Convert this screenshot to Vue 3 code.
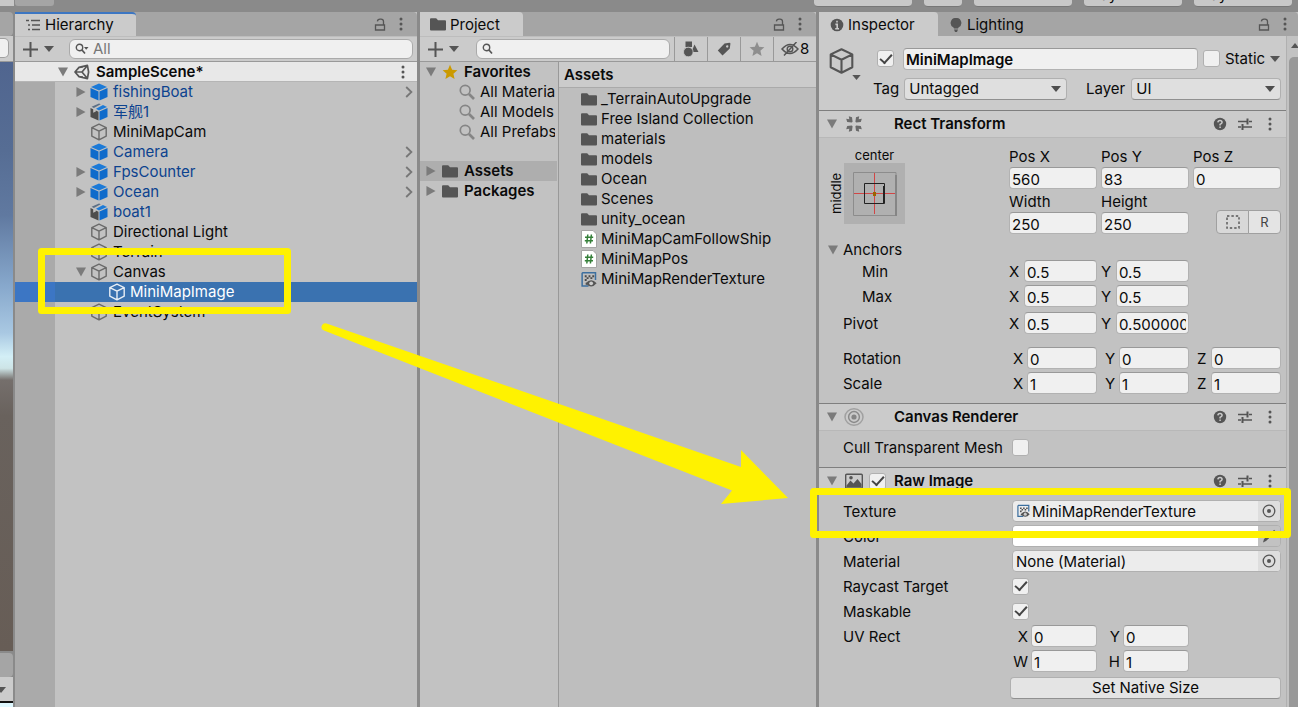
<script setup>
import { ref } from 'vue'

const tree = [
  { name: 'fishingBoat', icon: 'prefab', blue: true, fold: 'closed', open: true },
  { name: '军舰1', icon: 'model', blue: true, fold: 'closed' },
  { name: 'MiniMapCam', icon: 'cube' },
  { name: 'Camera', icon: 'prefab', blue: true, open: true },
  { name: 'FpsCounter', icon: 'prefab', blue: true, fold: 'closed', open: true },
  { name: 'Ocean', icon: 'prefab', blue: true, fold: 'closed', open: true },
  { name: 'boat1', icon: 'model', blue: true },
  { name: 'Directional Light', icon: 'cube' },
  { name: 'Terrain', icon: 'cube' },
  { name: 'Canvas', icon: 'cube', fold: 'opened' },
  { name: 'MiniMapImage', icon: 'cube', selected: true },
  { name: 'EventSystem', icon: 'cube' }
]

const favorites = ['All Materials', 'All Models', 'All Prefabs']

const assets = [
  { name: '_TerrainAutoUpgrade', icon: 'folder' },
  { name: 'Free Island Collection', icon: 'folder' },
  { name: 'materials', icon: 'folder' },
  { name: 'models', icon: 'folder' },
  { name: 'Ocean', icon: 'folder' },
  { name: 'Scenes', icon: 'folder' },
  { name: 'unity_ocean', icon: 'folder' },
  { name: 'MiniMapCamFollowShip', icon: 'script' },
  { name: 'MiniMapPos', icon: 'script' },
  { name: 'MiniMapRenderTexture', icon: 'texture' }
]

const sizeFields = ref([
  { label: 'Pos X', value: '560' },
  { label: 'Pos Y', value: '83' },
  { label: 'Pos Z', value: '0' },
  { label: 'Width', value: '250' },
  { label: 'Height', value: '250' }
])

const vectors = ref([
  { label: 'Min', kind: 'anchor indent', axes: [['X', '0.5'], ['Y', '0.5']] },
  { label: 'Max', kind: 'anchor indent', axes: [['X', '0.5'], ['Y', '0.5']] },
  { label: 'Pivot', kind: 'anchor pivot', axes: [['X', '0.5'], ['Y', '0.5000001']] },
  { label: 'Rotation', kind: 'turn', axes: [['X', '0'], ['Y', '0'], ['Z', '0']] },
  { label: 'Scale', kind: 'scale', axes: [['X', '1'], ['Y', '1'], ['Z', '1']] }
])

const uvRows = ref([
  { label: 'UV Rect', axes: [['X', '0'], ['Y', '0']] },
  { label: '', axes: [['W', '1'], ['H', '1']] }
])
</script>

<template>
  <div class="editor">
    <svg class="defs" aria-hidden="true">
      <symbol id="cube" viewBox="0 0 18 18">
        <path d="M9 1.2 16.2 4.6V13.2L9 16.8 1.8 13.2V4.6ZM1.8 4.6 9 8.2 16.2 4.6M9 8.2V16.8" fill="none" stroke="currentColor" stroke-width="1.4" stroke-linejoin="round" />
      </symbol>
      <symbol id="prefab" viewBox="0 0 18 18">
        <path d="M9 .4 17 3.900 9 7.600 1 3.900Z" fill="#1b7ad8" />
        <path d="M.5 5 8.500 8.600V17.600L.5 14Z" fill="#0f6bcb" />
        <path d="M17.500 5 9.500 8.600V17.600L17.500 14Z" fill="#0f6bcb" />
      </symbol>
      <symbol id="model" viewBox="0 0 18 18">
        <path d="M.5 5 3.200 6.200V9.800L5.800 8.600V7.500L8.500 8.700V17.600L.5 14Z" fill="#4d4d4d" />
        <path d="M9.500 8.600 17.500 5V14L9.500 17.600Z" fill="#0f6bcb" />
        <path d="M1.600 3.800 9 .4 10.800 1.200 3.800 5Z" fill="#5b6f86" />
        <path d="M6 5.800 13 2 17 3.900 9 7.600Z" fill="#1b7ad8" />
      </symbol>
      <symbol id="unity" viewBox="0 0 16 16">
        <path d="M1 8 5 3.400 13.400 1.400 14.600 8 13.400 14.600 5 12.600ZM1.400 8H8M8 8 13 2M8 8 13 14M5 3.400 9 2.800M5 12.600 9 13.200" fill="none" stroke="currentColor" stroke-width="1.700" stroke-linejoin="round" />
      </symbol>
      <symbol id="folder" viewBox="0 0 16 13">
        <path d="M0 1.2Q0 .2 1 .2H6.2L8 2.2H15Q16 2.2 16 3.2V11.6Q16 12.6 15 12.6H1Q0 12.6 0 11.6Z" fill="currentColor" />
      </symbol>
      <symbol id="script" viewBox="0 0 16 18">
        <path d="M.5.5H12L15.500 4V17.500H.5Z" fill="#fff" stroke="#a6a6a6" stroke-width="1" />
        <path d="M6.800 4.500 5.800 13.500M10.400 4.500 9.400 13.500M4 7.300H12.200M3.800 10.700H12" fill="none" stroke="#35803a" stroke-width="1.500" />
      </symbol>
      <symbol id="texture" viewBox="0 0 17 17">
        <path d="M1.2 1.2H15.4V9M8 15.400H1.2V1.2" fill="none" stroke="#3c6f9f" stroke-width="1.600" />
        <path d="M4 4h2v2H4zM8 4h2v2H8zM12 4h2v2h-2zM6 6h2v2H6zM10 6h2v2h-2zM4 8h2v2H4zM5 12h2v2H5z" fill="#4a4a4a" />
        <path d="M5 12.600Q10.800 5.800 16.600 12.600Q10.800 19.400 5 12.600Z" fill="#555" />
        <circle cx="10.800" cy="12.600" r="2" fill="#ccc" />
      </symbol>
      <symbol id="lens" viewBox="0 0 16 16">
        <circle cx="6.2" cy="6.2" r="4.9" fill="none" stroke="currentColor" stroke-width="1.700" />
        <path d="M10 10 15 15" stroke="currentColor" stroke-width="2.6" />
      </symbol>
      <symbol id="lock" viewBox="0 0 12 13">
        <path d="M1.500 7H10.500V12H1.500ZM9.500 7V3.500Q9.500 1.200 7 1.200H6Q3.600 1.200 3.400 3.400" fill="none" stroke="currentColor" stroke-width="1.300" />
      </symbol>
      <symbol id="dots" viewBox="0 0 4 14">
        <circle cx="2" cy="2" r="1.500" fill="currentColor" /><circle cx="2" cy="7" r="1.500" fill="currentColor" /><circle cx="2" cy="12" r="1.500" fill="currentColor" />
      </symbol>
      <symbol id="plus" viewBox="0 0 15 15">
        <path d="M7.500 0V15M0 7.500H15" stroke="currentColor" stroke-width="2" />
      </symbol>
      <symbol id="down" viewBox="0 0 10 6"><path d="M0 0H10L5 6Z" fill="currentColor" /></symbol>
      <symbol id="opened" viewBox="0 0 11 10"><path d="M0 0H11L5.500 10Z" fill="currentColor" /></symbol>
      <symbol id="closed" viewBox="0 0 10 11"><path d="M0 0V11L10 5.500Z" fill="currentColor" /></symbol>
      <symbol id="chevron" viewBox="0 0 8 12"><path d="M1.200 1 6.400 6 1.200 11" fill="none" stroke="currentColor" stroke-width="1.800" /></symbol>
      <symbol id="star" viewBox="0 0 16 16">
        <path d="M8 .8 10.100 5.800 15.400 6.200 11.400 9.700 12.600 15 8 12.200 3.400 15 4.600 9.700.6 6.200 5.900 5.800Z" fill="currentColor" />
      </symbol>
      <symbol id="help" viewBox="0 0 14 14">
        <circle cx="7" cy="7" r="6.200" fill="currentColor" />
        <path d="M4.900 5.400Q5 3.400 7 3.400T9.100 5.200Q9.100 6.300 7.100 7.300V8.400M7.100 9.500V11" fill="none" stroke="#cbcbcb" stroke-width="1.500" />
      </symbol>
      <symbol id="preset" viewBox="0 0 14 14">
        <path d="M0 4.500H9M11 4.500H14M0 10H3M5 10H14" stroke="currentColor" stroke-width="1.400" />
        <path d="M9.500 1.500V7.500M4.500 7V13" stroke="currentColor" stroke-width="2" />
      </symbol>
      <symbol id="target" viewBox="0 0 14 14">
        <circle cx="7" cy="7" r="5.800" fill="none" stroke="currentColor" stroke-width="1.300" /><circle cx="7" cy="7" r="2" fill="currentColor" />
      </symbol>
    </svg>

    <div class="topbar">
      <div class="topbar-left"><span class="stub light"></span><span class="stub dim"></span></div>
      <div class="topbar-right">
        <button class="top-button wide" aria-label="Collab"></button>
        <button class="top-button cloud" aria-label="Cloud"></button>
        <button class="top-button wide" aria-label="Account"></button>
        <button class="top-button wide">Layers</button>
        <button class="top-button wide">Layout</button>
      </div>
    </div>

    <div class="panels">
      <section class="scene">
        <div class="scene-tabs"></div>
        <div class="scene-tools"><span class="scene-field"></span></div>
        <div class="sky"></div>
        <div class="scene-tabs lower"></div>
        <div class="scene-tools foot"><svg class="i-down"><use href="#down" /></svg></div>
        <div class="game"></div>
      </section>

      <section class="panel">
        <header class="tabs">
          <button class="tab active hierarchy-tab">
            <svg class="i-list" viewBox="0 0 14 12"><path d="M0 1.500H3M5 1.500H14M2 6H4M6 6H14M2 10.500H4M6 10.500H14" stroke="currentColor" stroke-width="1.500" /></svg>
            Hierarchy
          </button>
          <span class="tab-tools"><svg class="i-lock"><use href="#lock" /></svg><svg class="i-dots"><use href="#dots" /></svg></span>
        </header>
        <div class="toolbar">
          <button class="add" aria-label="Create"><svg class="i-plus"><use href="#plus" /></svg><svg class="i-down"><use href="#down" /></svg></button>
          <label class="search hierarchy-search">
            <svg class="i-find" viewBox="0 0 14 12"><circle cx="4.500" cy="4.500" r="3.200" fill="none" stroke="currentColor" stroke-width="1.400" /><path d="M7 7 10 10.500" stroke="currentColor" stroke-width="1.700" /><path d="M9 4H13.500L11.200 6.800Z" fill="currentColor" /></svg>
            <input type="text" placeholder="All" aria-label="Search hierarchy" />
          </label>
        </div>
        <div class="tree">
          <div class="scene-row">
            <svg class="fold"><use href="#opened" /></svg>
            <svg class="i-unity"><use href="#unity" /></svg>
            <b>SampleScene*</b>
            <svg class="i-dots"><use href="#dots" /></svg>
          </div>
          <div v-for="node in tree" :key="node.name" class="node" :class="{ selected: node.selected, blue: node.blue }">
            <span class="gutter"></span>
            <span class="fold-slot"><svg v-if="node.fold" class="fold"><use :href="'#' + node.fold" /></svg></span>
            <svg class="i-cube"><use :href="'#' + node.icon" /></svg>
            <span class="node-name">{{ node.name }}</span>
            <svg v-if="node.open" class="i-chevron"><use href="#chevron" /></svg>
          </div>
          <div class="gutter rest"></div>
        </div>
      </section>

      <section class="panel">
        <header class="tabs">
          <button class="tab active project-tab"><svg class="i-folder"><use href="#folder" /></svg>Project</button>
          <span class="tab-tools"><svg class="i-lock"><use href="#lock" /></svg><svg class="i-dots"><use href="#dots" /></svg></span>
        </header>
        <div class="toolbar">
          <button class="add" aria-label="Create"><svg class="i-plus"><use href="#plus" /></svg><svg class="i-down"><use href="#down" /></svg></button>
          <label class="search project-search">
            <svg class="i-find" viewBox="0 0 14 12"><circle cx="4.500" cy="4.500" r="3.200" fill="none" stroke="currentColor" stroke-width="1.400" /><path d="M7 7 10 10.500" stroke="currentColor" stroke-width="1.700" /></svg>
            <input type="text" aria-label="Search project" />
          </label>
          <button class="filter" aria-label="Filter by type">
            <svg class="i-tool" viewBox="0 0 16 16"><path d="M2.500.5H9V6H2.500ZM11.500 3.500 15.500 11H8.500Z" fill="currentColor" /><circle cx="5.300" cy="11" r="4.800" fill="currentColor" stroke="#cbcbcb" stroke-width=".8" /></svg>
          </button>
          <button class="filter" aria-label="Filter by label">
            <svg class="i-tool" viewBox="0 0 16 16"><path d="M8.500 2.500 13.500 1.800Q14.500 1.800 14.400 2.800L13.800 7.500 6.500 14.500 1.800 9.500ZM11 4.300A1.200 1.200 0 1 0 12.400 5.600 1.200 1.200 0 0 0 11 4.300Z" fill="currentColor" fill-rule="evenodd" /></svg>
          </button>
          <button class="filter muted" aria-label="Save search"><svg class="i-tool"><use href="#star" /></svg></button>
          <button class="filter hidden-count" aria-label="Hidden packages">
            <svg class="i-eye" viewBox="0 0 18 14"><path d="M1 7Q9-2 17 7Q9 16 1 7ZM15.500 0 3 13.500" fill="none" stroke="currentColor" stroke-width="1.500" /><circle cx="9" cy="7" r="2.800" fill="none" stroke="currentColor" stroke-width="1.400" /></svg>8
          </button>
        </div>
        <div class="project-body">
          <nav class="sources">
            <div class="source top"><svg class="fold"><use href="#opened" /></svg><svg class="i-star"><use href="#star" /></svg><b>Favorites</b></div>
            <div v-for="f in favorites" :key="f" class="source child"><svg class="i-lens"><use href="#lens" /></svg><span>{{ f }}</span></div>
            <div class="source top picked"><svg class="fold"><use href="#closed" /></svg><svg class="i-folder"><use href="#folder" /></svg><b>Assets</b></div>
            <div class="source top"><svg class="fold"><use href="#closed" /></svg><svg class="i-folder"><use href="#folder" /></svg><b>Packages</b></div>
          </nav>
          <div class="assets">
            <div class="assets-head"><b>Assets</b></div>
            <ul>
              <li v-for="a in assets" :key="a.name"><svg :class="'i-' + a.icon"><use :href="'#' + a.icon" /></svg>{{ a.name }}</li>
            </ul>
          </div>
        </div>
      </section>

      <section class="panel inspector">
        <header class="tabs">
          <button class="tab active inspector-tab">
            <svg class="i-info" viewBox="0 0 14 14"><circle cx="7" cy="7" r="6.300" fill="currentColor" /><path d="M7 2.700V4.600M5.400 6.400H7.200V10.700M5.200 10.700H9" fill="none" stroke="#cbcbcb" stroke-width="1.600" /></svg>Inspector
          </button>
          <button class="tab lighting-tab">
            <svg class="i-info" viewBox="0 0 14 14"><path d="M7 0A5 5 0 0 1 9.500 9.500L9 10.500H5L4.500 9.500A5 5 0 0 1 7 0ZM5 11.500H9L8 14H6Z" fill="currentColor" /></svg>Lighting
          </button>
          <span class="tab-tools"><svg class="i-lock"><use href="#lock" /></svg><svg class="i-dots"><use href="#dots" /></svg></span>
        </header>
        <div class="inspector-view">
          <div class="inspector-body">
            <div class="object">
              <div class="object-icon"><svg class="i-big"><use href="#cube" /></svg><svg class="i-small-down"><use href="#down" /></svg></div>
              <div class="object-fields">
                <div class="object-row">
                  <input class="check" type="checkbox" checked aria-label="Active" />
                  <input class="field object-name" type="text" value="MiniMapImage" aria-label="Name" />
                  <label class="static"><input class="check" type="checkbox" />Static<svg class="i-down"><use href="#down" /></svg></label>
                </div>
                <div class="object-row second">
                  <label for="tag">Tag</label>
                  <span class="select tag"><select id="tag"><option>Untagged</option></select></span>
                  <label class="layer-label" for="layer">Layer</label>
                  <span class="select layer"><select id="layer"><option>UI</option></select></span>
                </div>
              </div>
            </div>

            <div class="component-head">
              <svg class="fold"><use href="#opened" /></svg>
              <svg class="i-comp" viewBox="0 0 18 18"><path id="wedge" d="M3.800 1.200 7 2.200 7.600 6.800 6.800 7.600 2.200 7 1.200 3.800 4.300 4.300Z" fill="#6a6a6a" /><use href="#wedge" transform="matrix(-1 0 0 1 18 0)" /><use href="#wedge" transform="matrix(1 0 0 -1 0 18)" /><use href="#wedge" transform="matrix(-1 0 0 -1 18 18)" /></svg>
              <span class="head-slot"></span><b>Rect Transform</b>
              <span class="head-tools"><svg class="i-help"><use href="#help" /></svg><svg class="i-help"><use href="#preset" /></svg><svg class="i-dots"><use href="#dots" /></svg></span>
            </div>
            <div class="rect-body">
              <div class="rect-top">
                <div class="anchor-preset">
                  <span class="h-align">center</span>
                  <span class="v-align">middle</span>
                  <svg class="anchor-box" viewBox="0 0 61 61">
                    <rect width="61" height="61" fill="#b0b0b0" />
                    <path d="M9.500 9.500H52V52.500H9.500Z" fill="none" stroke="#8c8c8c" />
                    <path d="M52 12V53" stroke="#858585" stroke-width="2" />
                    <path d="M30.500 10V51M10 30.500H51" stroke="#d24545" />
                    <path d="M20.500 20.500H40.500V40.500H20.500Z" fill="none" stroke="#222" />
                    <path d="M40 23V40" stroke="#222" stroke-width="2" />
                    <rect x="29" y="29" width="3" height="4" fill="#9a6500" />
                  </svg>
                </div>
                <div class="size-grid">
                  <label v-for="f in sizeFields" :key="f.label" class="size-field">{{ f.label }}<input v-model="f.value" class="field" type="text" /></label>
                  <div class="mode-buttons">
                    <button aria-label="Blueprint mode"><svg class="i-dash" viewBox="0 0 14 14"><rect x="1" y="1" width="12" height="12" fill="none" stroke="currentColor" stroke-width="1.400" stroke-dasharray="2.400 2" /></svg></button>
                    <button>R</button>
                  </div>
                </div>
              </div>
              <div class="anchors-row"><svg class="fold"><use href="#opened" /></svg>Anchors</div>
              <div v-for="v in vectors" :key="v.label" class="prop vector" :class="v.kind">
                <span class="prop-label">{{ v.label }}</span>
                <div class="triple">
                  <label v-for="axis in v.axes" :key="axis[0]" class="axis"><span>{{ axis[0] }}</span><input v-model="axis[1]" class="field" type="text" /></label>
                </div>
              </div>
            </div>

            <div class="component-head">
              <svg class="fold"><use href="#opened" /></svg>
              <svg class="i-comp wide-icon" viewBox="0 0 20 18"><g fill="none" stroke="#8a8a8a" stroke-width="1.500"><ellipse cx="10" cy="9" rx="9" ry="8.200" stroke="#a0a0a0" /><circle cx="10" cy="9" r="5.400" /></g><circle cx="10" cy="9" r="2.600" fill="#858585" /></svg>
              <span class="head-slot"></span><b>Canvas Renderer</b>
              <span class="head-tools"><svg class="i-help"><use href="#help" /></svg><svg class="i-help"><use href="#preset" /></svg><svg class="i-dots"><use href="#dots" /></svg></span>
            </div>
            <div class="canvas-body">
              <label class="prop"><span class="prop-label">Cull Transparent Mesh</span><input class="check" type="checkbox" /></label>
            </div>

            <div class="component-head">
              <svg class="fold"><use href="#opened" /></svg>
              <svg class="i-comp" viewBox="0 0 18 18"><rect x=".7" y="2.200" width="16.600" height="14" rx="1" fill="none" stroke="#555" stroke-width="1.400" /><path d="M1.500 13.500 5.500 8.500 8.500 11.500 12.500 7 16.500 12V15.500H1.500Z" fill="#555" /><circle cx="6" cy="5.800" r="1.800" fill="#555" /></svg>
              <span class="head-slot"><input class="check" type="checkbox" checked aria-label="Raw Image enabled" /></span><b>Raw Image</b>
              <span class="head-tools"><svg class="i-help"><use href="#help" /></svg><svg class="i-help"><use href="#preset" /></svg><svg class="i-dots"><use href="#dots" /></svg></span>
            </div>
            <div class="raw-body">
              <div class="prop"><span class="prop-label">Texture</span><button class="object-field"><svg class="i-mini"><use href="#texture" /></svg><span>MiniMapRenderTexture</span><i><svg class="i-target"><use href="#target" /></svg></i></button></div>
              <div class="prop"><span class="prop-label">Color</span><button class="object-field color" aria-label="Color"><span></span><i><svg class="i-target" viewBox="0 0 14 14"><path d="M1 13.500 2 10 8 4.500 10 6.500 4 12ZM8 2.500 9.500 4 12 .8 13.800 2.600 11.300 5.500 12 7 7.500 3Z" fill="currentColor" /></svg></i></button></div>
              <div class="prop"><span class="prop-label">Material</span><button class="object-field"><span>None (Material)</span><i><svg class="i-target"><use href="#target" /></svg></i></button></div>
              <label class="prop"><span class="prop-label">Raycast Target</span><input class="check" type="checkbox" checked /></label>
              <label class="prop"><span class="prop-label">Maskable</span><input class="check" type="checkbox" checked /></label>
              <div v-for="row in uvRows" :key="row.label" class="prop uv">
                <span class="prop-label">{{ row.label }}</span>
                <div class="triple">
                  <label v-for="axis in row.axes" :key="axis[0]" class="axis"><span>{{ axis[0] }}</span><input v-model="axis[1]" class="field" type="text" /></label>
                </div>
              </div>
              <button class="native">Set Native Size</button>
            </div>
          </div>
          <div class="scrollbar"><svg class="i-up" viewBox="0 0 8 5"><path d="M0 5 4 0 8 5Z" fill="currentColor" /></svg><span></span></div>
        </div>
      </section>
    </div>

    <svg class="notes" width="1298" height="707" viewBox="0 0 1298 707" aria-hidden="true">
      <g fill="none" stroke="#fff200" stroke-width="7" stroke-linejoin="round">
        <rect x="41.500" y="251.500" width="246" height="59" />
        <rect x="813.500" y="491.500" width="474" height="43" />
      </g>
      <path d="M326.500 323.500 741 467V450L788 498 721 504 732 490.500 324 330.500A3.700 3.700 0 0 1 326.500 323.500Z" fill="#fff200" />
    </svg>
  </div>
</template>

<style>
body { margin: 0; background: #8a8a8a; }
</style>

<style scoped>
* { box-sizing: border-box; }
.editor {
  position: relative;
  display: flex;
  flex-direction: column;
  height: 100vh;
  overflow: hidden;
  background: #8a8a8a;
  color: #0a0a0a;
  font: 15px/20px Inter, "Noto Sans CJK SC", sans-serif;
}
button, input, select { font: inherit; color: inherit; margin: 0; }
button { border: 0; padding: 0; background: none; }
svg { display: block; flex: none; color: #555; }
b { font-weight: 600; }
.defs { position: absolute; width: 0; height: 0; }

.topbar { display: flex; justify-content: space-between; height: 12px; flex: none; overflow: hidden; }
.topbar-left { display: flex; gap: 1px; }
.stub.light { width: 14px; height: 6px; background: #c8c8c8; }
.stub.dim { width: 39px; height: 6px; background: #a5a5a5; border-radius: 0 0 3px 3px; }
.topbar-right { display: flex; align-items: flex-end; height: 7px; gap: 12px; padding-right: 6px; }
.top-button { height: 22px; width: 98px; line-height: 20px; text-align: left; padding: 0 0 5px 8px; background: #c8c8c8; border-bottom: 1px solid #777; border-radius: 4px; flex: none; }
.top-button.cloud { width: 38px; }

.panels { flex: 1; min-height: 0; display: grid; grid-template-columns: 13px minmax(0, 404fr) minmax(0, 399fr) minmax(0, 482fr); }
.panel { display: flex; flex-direction: column; min-width: 0; margin-left: 3px; background: #c2c2c2; }
.scene + .panel { margin-left: 2px; }

.scene { display: flex; flex-direction: column; }
.scene-tabs { height: 24px; background: #a5a5a5; border-radius: 0 4px 4px 0; }
.scene-tabs.lower { margin-top: 2px; }
.scene-tools { height: 26px; background: #cbcbcb; border-bottom: 1px solid #999; padding-top: 2px; }
.scene-tools .scene-field { display: block; width: 9px; height: 20px; background: #f0f0f0; border: 1px solid #a0a0a0; border-left: 0; border-radius: 0 5px 5px 0; }
.scene-tools.foot { border-bottom: 2px solid #111; padding-top: 10px; overflow: hidden; }
.foot .i-down { margin-left: -4px; }
.sky { flex: 1; background: linear-gradient(#50658f 0, #566d94 15%, #6079a0 26%, #87a8cc 38%, #a9c8e2 46%, #d3eff6 50%, #cde4e6 52%, #756f6c 54%, #69625d 60%, #675d56 100%); }
.game { height: 4px; background: #dff8ff; }

.tabs { display: flex; align-items: stretch; height: 24px; flex: none; background: #a5a5a5; border-radius: 0 4px 0 0; }
.tab { display: flex; align-items: center; gap: 4px; padding: 1px 0 0 11px; }
.tab.active { background: #cbcbcb; border-radius: 0 4px 0 0; }
.tab.hierarchy-tab { width: 121px; gap: 5px; padding-top: 0; border-top: 2px solid #3c76c2; }
.project-tab { width: 103px; }
.tab.project-tab { padding-left: 10px; }
.inspector-tab { width: 119px; }
.lighting-tab { width: 110px; }
.tab-tools { margin-left: auto; display: flex; align-items: center; gap: 13px; padding-right: 14px; }
.inspector .tab-tools { padding-right: 11px; }
.i-list { width: 14px; height: 12px; }
.i-lock { width: 12px; height: 13px; }
.i-dots { width: 4px; height: 14px; }
.i-info { width: 14px; height: 14px; }
.i-folder { width: 16px; height: 13px; }

.toolbar { display: flex; align-items: center; height: 26px; flex: none; padding-left: 8px; background: #cbcbcb; border-bottom: 1px solid #999; border-top: 1px solid #bdbdbd; }
.add { display: flex; align-items: center; gap: 6px; width: 46px; }
.i-plus { width: 15px; height: 15px; }
.i-down { width: 10px; height: 6px; }
.search { display: flex; align-items: center; flex: 1; min-width: 0; height: 20px; padding-left: 5px; gap: 4px; background: #f0f0f0; border: 1px solid #aaa; border-radius: 6px; }
.hierarchy-search { margin-right: 4px; }
.project-search { margin: 0 4px 0 2px; }
.search input { flex: 1; min-width: 0; border: 0; padding: 0; background: none; outline: 0; line-height: 18px; }
.search input::placeholder { color: #777; opacity: 1; }
.i-find { width: 14px; height: 12px; }
.filter { display: grid; place-items: center; width: 33px; height: 25px; border-left: 1px solid #999; }
.filter.muted svg { color: #8e8e8e; }
.filter.hidden-count { display: flex; align-items: center; width: 43px; padding-left: 7px; gap: 1px; }
.i-tool { width: 16px; height: 16px; }
.i-eye { width: 18px; height: 14px; }

.tree { flex: 1; min-height: 0; display: flex; flex-direction: column; }
.scene-row { display: flex; align-items: center; height: 20px; flex: none; padding: 0 12px 0 43px; background: #e8e8e8; border-bottom: 1px solid #b5b5b5; }
.scene-row .i-dots { margin-left: auto; }
.fold { width: 10px; height: 10px; color: #7b7b7b; }
.i-unity { width: 16px; height: 16px; margin: 0 6px; }
.node { display: flex; align-items: center; height: 20px; flex: none; padding-right: 4px; }
.gutter { width: 40px; align-self: stretch; background: #aaa; }
.tree > .rest { flex: 1; align-self: flex-start; }
.fold-slot { width: 35px; padding-left: 21px; }
.i-cube { width: 18px; height: 18px; color: #6a6a6a; }
.node-name { padding-left: 5px; }
.blue { color: #0c428f; }
.i-chevron { width: 8px; height: 12px; margin-left: auto; color: #777; }
.selected { background: #3a72b0; color: #fff; }
.selected .gutter { background: #3c76c4; }
.selected .fold-slot { width: 53px; }
.selected .node-name { padding-left: 4px; }
.selected .i-cube { color: #e8eef5; }

.project-body { flex: 1; min-height: 0; display: grid; grid-template-columns: 139px minmax(0, 1fr); }
.sources { min-width: 0; overflow: hidden; border-right: 1px solid #999; padding-right: 1px; white-space: nowrap; }
.source { display: flex; align-items: center; height: 20px; overflow: hidden; }
.top { padding-left: 6px; }
.top .fold { margin-right: 6px; }
.top b { padding-left: 6px; }
.child { margin-right: 2px; padding-left: 39px; gap: 5px; }
.picked { margin-top: 19px; background: #aeaeae; }
.i-star { width: 16px; height: 16px; color: #cb9a00; }
.i-lens { width: 16px; height: 16px; color: #858585; }
.assets { background: #bebebe; }
.assets-head { height: 26px; line-height: 26px; padding-left: 5px; background: #cbcbcb; border-bottom: 1px solid #aaa; }
.assets ul { list-style: none; margin: 0; padding: 1px 0 0 22px; }
.assets li { display: flex; align-items: center; gap: 4px; height: 20px; white-space: nowrap; }
.i-script { width: 16px; height: 18px; }
.i-texture { width: 16px; height: 17px; }

.inspector-view { flex: 1; min-height: 0; display: flex; }
.inspector-body { flex: 1; min-width: 0; border-right: 1px solid #b0b0b0; }
.scrollbar { width: 11px; padding: 7px 0 0 2px; background: #c2c2c2; display: flex; flex-direction: column; gap: 9px; overflow: hidden; }
.scrollbar span { flex: 1; background: #999; border-radius: 5px 0 0 0; }
.i-up { width: 8px; height: 5px; margin-left: 2px; }

.object { display: flex; height: 74px; padding: 11px 5px 0 9px; background: #cbcbcb; }
.object-icon { width: 44px; }
.i-big { width: 27px; height: 28px; }
.i-small-down { width: 9px; height: 5px; margin-left: 24px; }
.object-fields { flex: 1; min-width: 0; }
.object-row { display: flex; align-items: center; padding-left: 5px; height: 23px; }
.object-row.second { margin-top: 7px; padding-left: 1px; }
.object-name { flex: 1; margin: 0 5px 0 9px; font-weight: 600; }
.static { display: flex; align-items: center; width: 78px; }
.static .check { margin-right: 5px; }
.static .i-down { margin-left: 5px; }
.check { appearance: none; display: grid; place-items: center; flex: none; width: 17px; height: 17px; background: #f0f0f0; border: 1px solid #b0b0b0; border-radius: 3px; }
.check:checked::after { content: ""; width: 10px; height: 5px; border: solid #444; border-width: 0 0 2px 2px; transform: rotate(-48deg); margin-bottom: 3px; }
.field { display: block; min-width: 0; width: 100%; height: 22px; padding: 2px 2px 0; background: #f0f0f0; border: 1px solid #b2b2b2; border-top-color: #999; border-radius: 4px; outline: 0; }
.select { position: relative; display: block; min-width: 0; }
.select::after { content: ""; position: absolute; right: 6px; top: 8px; border: solid transparent; border-width: 6px 5px 0; border-top-color: #4d4d4d; }
.select select { appearance: none; display: block; width: 100%; height: 22px; padding: 0 4px; background: #dfdfdf; border: 1px solid #b0b0b0; border-bottom-color: #909090; border-radius: 4px; }
.select.tag { flex: 162; margin-left: 5px; }
.select.layer { flex: 149; margin-left: 6px; }
.layer-label { margin-left: 19px; }

.component-head { display: flex; align-items: center; height: 28px; padding: 0 14px 0 8px; background: #cbcbcb; border-top: 1px solid #7f7f7f; border-bottom: 1px solid #b8b8b8; }
.i-comp { width: 18px; height: 18px; margin-left: 8px; }
.wide-icon { width: 20px; height: 18px; margin: 0 -1px 0 7px; }
.head-slot { width: 31px; padding-left: 6px; }
.head-tools { margin-left: auto; display: flex; align-items: center; gap: 11px; }
.head-tools .i-dots { margin-left: 5px; }
.i-help { width: 14px; height: 14px; }

.rect-body { padding: 9px 5px 9px 24px; }
.rect-top { display: flex; }
.anchor-preset { width: 166px; display: grid; grid-template: 16px 61px / 1px 61px; }
.h-align { grid-column: 2; font-size: 13px; line-height: 16px; text-align: center; }
.v-align { grid-row: 2; justify-self: end; writing-mode: vertical-rl; transform: rotate(180deg); font-size: 13px; line-height: 16px; text-align: center; }
.anchor-box { width: 61px; height: 61px; }
.size-grid { flex: 1; min-width: 0; display: grid; grid-template-columns: repeat(3, minmax(0, 1fr)); gap: 3px 4px; }
.mode-buttons { display: flex; align-self: end; justify-self: end; }
.mode-buttons button { display: grid; place-items: center; width: 33px; height: 24px; background: #d8d8d8; border: 1px solid #a0a0a0; border-radius: 4px 0 0 4px; font-size: 13px; color: #444; }
.mode-buttons button + button { margin-left: -1px; background: #e4e4e4; border-radius: 0 4px 4px 0; }
.i-dash { width: 14px; height: 14px; }
.anchors-row { display: flex; align-items: center; height: 20px; margin: 6px 0 0 -15px; gap: 5px; }

.prop { display: flex; align-items: center; height: 22px; margin-bottom: 3px; }
.prop-label { width: 169px; flex: none; padding-top: 2px; white-space: nowrap; }
.vector .prop-label, .uv .prop-label { width: 166px; }
.indent .prop-label { padding-left: 19px; }
.pivot { margin: 5px 0 13px; }
.scale { margin-bottom: 0; }
.triple { flex: 1; min-width: 0; display: grid; grid-template-columns: repeat(3, minmax(0, 1fr)); gap: 4px; }
.axis { display: flex; align-items: center; min-width: 0; }
.axis span { width: 15px; flex: none; padding-top: 1px; }
.turn .axis span, .scale .axis span { width: 18px; padding-left: 4px; }
.uv .axis span { width: 22px; text-align: right; padding-right: 3px; }
.canvas-body { padding: 5px 5px 6px 24px; }
.raw-body { padding: 5px 5px 0 24px; }
.object-field { display: flex; align-items: center; flex: 1; min-width: 0; height: 22px; padding-left: 3px; background: #ececec; border: 1px solid #b0b0b0; border-radius: 4px; text-align: left; overflow: hidden; }
.object-field span { flex: 1; padding-top: 1px; }
.object-field i { display: grid; place-items: center; width: 22px; height: 20px; background: #dedede; }
.object-field.color { padding: 0; background: #c8c8c8; }
.color span { align-self: stretch; background: #fff; }
.color i { background: #c2c2c2; }
.i-mini { width: 13px; height: 14px; margin: 0 2px 0 1px; }
.i-target { width: 14px; height: 14px; }
.native { display: block; width: calc(100% - 167px); height: 22px; margin: 5px 0 0 167px; background: #e4e4e4; border: 1px solid #b0b0b0; border-bottom-color: #909090; border-radius: 4px; }

.notes { position: absolute; left: 0; top: 0; pointer-events: none; }
</style>
